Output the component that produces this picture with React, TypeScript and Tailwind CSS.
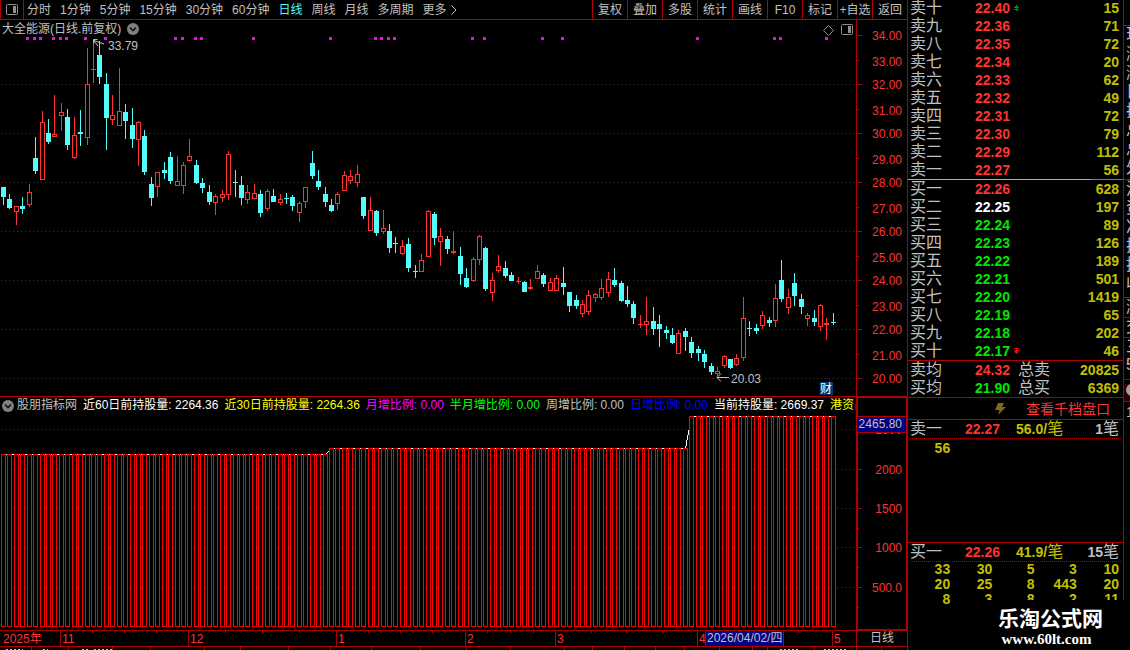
import { ReactNode } from 'react'

const LINE = '#b00000'
const UP = '#ff3232'
const DOWN = '#54fcfc'
const GRAY = '#c0c0c0'

const periods = ['分时', '1分钟', '5分钟', '15分钟', '30分钟', '60分钟', '日线', '周线', '月线', '多周期']
const tools = ['复权', '叠加', '多股', '统计', '画线', 'F10', '标记', '+自选', '返回']

// up (1) or down (0), then high, body top, body bottom, low in chart units
const candles: number[][] = [
  [0, 187, 187, 197, 205], [0, 194, 199, 208, 209], [1, 206, 206, 212, 225], [0, 197, 206, 209, 214], [1, 184, 192, 205, 207],
  [0, 137, 158, 171, 174], [1, 111, 122, 180, 180], [0, 119, 133, 142, 144], [1, 95, 134, 137, 137], [1, 103, 112, 116, 131],
  [0, 109, 117, 145, 150], [1, 117, 135, 158, 159], [0, 110, 132, 134, 146], [1, 48, 84, 138, 145], [1, 40, 69, 70, 83],
  [0, 41, 55, 77, 84], [0, 73, 84, 118, 150], [1, 95, 115, 120, 125], [1, 68, 111, 126, 126], [0, 104, 112, 121, 139],
  [0, 108, 125, 139, 148], [1, 121, 122, 140, 166], [0, 130, 136, 172, 175], [0, 177, 184, 198, 206], [1, 172, 172, 187, 197],
  [0, 162, 170, 173, 179], [0, 152, 157, 181, 184], [1, 156, 181, 186, 186], [1, 162, 165, 186, 194], [1, 139, 156, 161, 162],
  [0, 160, 165, 183, 184], [0, 178, 183, 188, 193], [0, 185, 192, 202, 205], [1, 194, 196, 203, 215], [1, 190, 194, 198, 202],
  [1, 151, 154, 195, 200], [0, 170, 182, 183, 197], [0, 176, 185, 198, 205], [1, 185, 192, 200, 204], [1, 184, 193, 199, 199],
  [0, 190, 194, 213, 217], [1, 189, 191, 209, 211], [0, 189, 196, 202, 202], [1, 194, 199, 203, 205], [0, 193, 198, 199, 204],
  [0, 195, 197, 206, 211], [1, 201, 203, 213, 222], [1, 187, 187, 202, 208], [0, 151, 163, 176, 179], [0, 170, 181, 187, 190],
  [0, 187, 194, 202, 207], [0, 199, 205, 211, 212], [1, 192, 194, 204, 210], [1, 171, 175, 191, 191], [1, 170, 176, 181, 184],
  [1, 165, 174, 183, 187], [0, 197, 197, 216, 219], [1, 197, 210, 231, 231], [0, 210, 211, 233, 236], [1, 210, 228, 232, 234],
  [0, 224, 231, 248, 253], [0, 237, 243, 244, 253], [1, 240, 246, 254, 255], [0, 238, 244, 268, 272], [0, 265, 271, 272, 278],
  [1, 254, 260, 272, 272], [1, 210, 211, 257, 257], [0, 212, 214, 238, 245], [1, 228, 236, 242, 266], [0, 236, 239, 249, 254],
  [1, 231, 251, 253, 254], [0, 247, 256, 274, 285], [0, 268, 278, 287, 288], [1, 257, 259, 281, 282], [1, 235, 236, 260, 265],
  [0, 247, 248, 289, 291], [1, 273, 280, 293, 301], [1, 255, 266, 271, 273], [0, 261, 268, 276, 278], [0, 272, 275, 281, 281],
  [1, 277, 281, 282, 284], [0, 281, 282, 292, 292], [1, 279, 287, 289, 290], [1, 265, 271, 279, 279], [0, 273, 275, 284, 287],
  [1, 278, 282, 291, 291], [1, 275, 278, 291, 291], [0, 267, 283, 287, 295], [0, 292, 292, 306, 312], [0, 295, 300, 306, 309],
  [1, 300, 304, 314, 317], [1, 290, 295, 312, 315], [1, 293, 294, 298, 302], [1, 279, 288, 298, 300], [1, 272, 279, 293, 297],
  [0, 268, 280, 285, 287], [0, 281, 283, 301, 302], [0, 286, 300, 304, 307], [0, 301, 304, 318, 324], [1, 315, 324, 325, 328],
  [1, 297, 321, 325, 335], [0, 307, 321, 329, 335], [0, 315, 324, 329, 347], [0, 326, 330, 333, 339], [0, 328, 335, 343, 344],
  [1, 330, 333, 354, 354], [0, 328, 331, 337, 351], [0, 337, 342, 353, 358], [0, 346, 349, 353, 361], [0, 350, 354, 362, 368],
  [0, 363, 366, 372, 375], [1, 367, 371, 374, 376], [1, 355, 356, 366, 368], [0, 359, 359, 368, 369], [1, 354, 358, 365, 366],
  [1, 297, 318, 358, 361], [0, 321, 328, 329, 336], [0, 324, 328, 331, 334], [1, 311, 315, 326, 329], [0, 317, 320, 323, 327],
  [1, 284, 298, 321, 327], [0, 260, 280, 299, 302], [1, 289, 297, 308, 314], [0, 273, 283, 296, 306], [0, 294, 299, 307, 314],
  [1, 313, 315, 319, 326], [0, 310, 318, 322, 326], [1, 304, 305, 327, 331], [1, 318, 323, 325, 340], [0, 313, 322, 323, 325],
]

const signals = [26, 33, 39, 52, 59, 65, 84, 104, 174, 181, 194, 200, 252, 329, 374, 380, 387, 393, 471, 483, 541, 561, 696, 773, 779, 825]
const barX = (i: number) => Math.floor(3.4 + i * 6.434)
const barTop = (i: number) => (i < 51 ? 454 : i < 107 ? 448 : 416)

const asks = [
  ['卖十', '22.40', '15'], ['卖九', '22.36', '71'], ['卖八', '22.35', '72'], ['卖七', '22.34', '20'], ['卖六', '22.33', '62'],
  ['卖五', '22.32', '49'], ['卖四', '22.31', '72'], ['卖三', '22.30', '79'], ['卖二', '22.29', '112'], ['卖一', '22.27', '56'],
]
const bids = [
  ['买一', '22.26', '628'], ['买二', '22.25', '197'], ['买三', '22.24', '89'], ['买四', '22.23', '126'], ['买五', '22.22', '189'],
  ['买六', '22.21', '501'], ['买七', '22.20', '1419'], ['买八', '22.19', '65'], ['买九', '22.18', '202'], ['买十', '22.17', '46'],
]

const indicators = [
  { text: '近60日前持股量: 2264.36', cls: 'text-white' },
  { text: '近30日前持股量: 2264.36', cls: 'text-[#ffff00]' },
  { text: '月增比例: 0.00', cls: 'text-[#ff00ff]' },
  { text: '半月增比例: 0.00', cls: 'text-[#00ff00]' },
  { text: '周增比例: 0.00', cls: 'text-[#c0c0c0]' },
  { text: '日增比例: 0.00', cls: 'text-[#0000ff]' },
  { text: '当前持股量: 2669.37', cls: 'text-white' },
  { text: '港资占比', cls: 'text-[#ffff00]' },
]

const months: [number, string][] = [[60, '11'], [188, '12'], [336, '1'], [465, '2'], [555, '3'], [697, '4'], [832, '5']]

function PanelIcon() {
  return (
    <svg className="size-3 shrink-0" viewBox="0 0 12 12" fill="none">
      <rect x="0.5" y="0.5" width="11" height="10" rx="1" stroke="#909090" />
      <rect x="7" y="2" width="3" height="7" fill="#909090" />
    </svg>
  )
}

function ChevronBadge() {
  return (
    <svg className="size-3 shrink-0" viewBox="0 0 12 12">
      <circle cx="6" cy="6" r="6" fill="#808080" />
      <path d="M3 4.5 6 7.5 9 4.5" fill="none" stroke="#101010" strokeWidth="1.6" />
    </svg>
  )
}

function GridLine({ y }: { y: number }) {
  return <line x1="1" x2="856" y1={y + 0.5} y2={y + 0.5} stroke={LINE} strokeDasharray="1 3" />
}

function Candle({ i }: { i: number }) {
  const [up, high, top, bottom, low] = candles[i]
  const x = barX(i)
  const h = bottom - top
  if (!up) {
    return (
      <g fill={DOWN}>
        <rect x={x} y={high} width="1" height={low - high} />
        <rect x={x - 2} y={top} width="5" height={h} />
      </g>
    )
  }
  return (
    <g fill={UP}>
      <rect x={x} y={high} width="1" height={low - high} />
      {h < 3
        ? <rect x={x - 2} y={top} width="5" height={h} />
        : <rect x={x - 1.5} y={top + 0.5} width="4" height={h - 1} fill="#000" stroke={UP} />}
    </g>
  )
}

function PriceChart() {
  return (
    <svg className="block h-[376px] w-full" viewBox="0 20 856 376" preserveAspectRatio="xMaxYMin meet" fontSize="12">
      <g shapeRendering="crispEdges">
        {[84, 133, 182, 231, 280, 329, 378].map(y => <GridLine key={y} y={y} />)}
        {signals.map(x => <rect key={x} x={x} y="37" width="3" height="3" fill="#ff00ff" />)}
        {candles.map((_, i) => <Candle key={i} i={i} />)}
      </g>
      <g fill="none" stroke={GRAY}>
        <path d="M94 40.5 104 44M97.5 39.5H93.5V43.5M94 41 98 46" />
        <path d="M717 377.5H729M721 373.5 717 377.5 721 381.5" />
      </g>
      <text x="108" y="50" fill={GRAY}>33.79</text>
      <text x="731" y="383" fill={GRAY}>20.03</text>
      <rect x="820" y="382" width="13" height="13" fill="#003a6e" />
      <text x="820" y="393" fill="#fff">财</text>
    </svg>
  )
}

function PriceAxis() {
  const rows = Array.from({ length: 15 }, (_, i) => 34 - i)
  return (
    <svg className="block h-[376px] w-[51px] shrink-0" viewBox="856 20 51 376" fontSize="12">
      <rect x="856" y="20" width="1" height="376" fill={LINE} />
      {rows.map((p, i) => {
        const y = Math.floor(35.5 + i * 24.5)
        return (
          <g key={p}>
            <rect x="857" y={y} width={p % 2 ? 2 : 5} height="1" fill={LINE} />
            <text x="902" y={p % 2 ? y + 6 : y + 5} textAnchor="end" fill={UP}>{p.toFixed(2)}</text>
          </g>
        )
      })}
    </svg>
  )
}

function HoldingChart() {
  const points = candles.map((_, i) => `${barX(i) + 0.5},${barTop(i) + 0.5}`).join(' ')
  return (
    <svg className="block h-[216px] w-full" viewBox="0 414 856 216" preserveAspectRatio="xMaxYMin meet" shapeRendering="crispEdges">
      {[429, 469, 508, 547, 587].map(y => <GridLine key={y} y={y} />)}
      <polyline points={points} fill="none" stroke="#fff" />
      {candles.map((_, i) => (
        <rect key={i} x={barX(i) - 1.5} y={barTop(i) + 0.5} width="4" height={626 - barTop(i)} fill="#000" stroke="#ff0000" />
      ))}
    </svg>
  )
}

function HoldingAxis() {
  const labels: [number, string][] = [[429, '2500'], [469, '2000'], [508, '1500'], [547, '1000'], [587, '500.0']]
  return (
    <svg className="block h-[233px] w-[51px] shrink-0" viewBox="856 397 51 233" fontSize="12">
      <path d="M856 397H907V630H856ZM858 398V629H906V398Z" fill={LINE} fillRule="evenodd" />
      {labels.map(([y, t]) => (
        <g key={t}>
          <rect x="858" y={y} width="4" height="1" fill={LINE} />
          <rect x="858" y={y + 20} width="1" height="1" fill={LINE} />
          <text x="902" y={y + 5} textAnchor="end" fill={UP}>{t}</text>
        </g>
      ))}
      <rect x="858" y="416" width="48" height="17" fill={LINE} />
      <rect x="857" y="417" width="49" height="15" fill="#000080" />
      <text x="902" y="428" textAnchor="end" fill={GRAY}>2465.80</text>
    </svg>
  )
}

function DateAxis() {
  return (
    <svg className="block h-[15px] w-full" viewBox="0 631 856 15" preserveAspectRatio="xMaxYMin meet" fontSize="12">
      <text x="3" y="643" fill={UP}>2025年</text>
      {months.map(([x, t]) => (
        <g key={t}>
          <rect x={x} y="631" width="1" height="15" fill={LINE} />
          <text x={x + 2} y="643" fill={UP}>{t}</text>
        </g>
      ))}
      {[92, 124, 156, 225, 262, 299, 368, 400, 432, 487, 510, 533, 591, 626, 662, 798].map(x => (
        <rect key={x} x={x} y="631" width="1" height="2" fill={LINE} />
      ))}
      <rect x="705" y="631" width="79" height="15" fill={LINE} />
      <rect x="706" y="631" width="77" height="15" fill="#000080" />
      <text x="707" y="642" fill={GRAY}>2026/04/02/四</text>
    </svg>
  )
}

function Quote({ label, price, color, vol, mark }: { label: string; price: string; color: string; vol: string; mark?: ReactNode }) {
  return (
    <tr className="h-[18px]">
      <th scope="row" className="w-[67px] p-0 pl-[2px] text-left text-base leading-[18px] font-normal text-[#c0c0c0]">{label}</th>
      <td className={`p-0 ${color}`}>
        <span className="flex items-center gap-1">{price}{mark}</span>
      </td>
      <td className="p-0 pr-1 text-right text-[#c0c000]">{vol}</td>
    </tr>
  )
}

function Total({ label, price, color, sum, vol }: { label: string; price: string; color: string; sum: string; vol: string }) {
  return (
    <div className="flex h-[18px] items-center pr-1 pl-[2px] text-[#c0c0c0]">
      <span className="w-[65px] text-base leading-[18px] font-normal">{label}</span>
      <span className={`w-[43px] ${color}`}>{price}</span>
      <span className="text-base leading-[18px] font-normal">{sum}</span>
      <span className="ml-auto text-[#c0c000]">{vol}</span>
    </div>
  )
}

function QueueHead({ label, price, avg, count }: { label: string; price: string; avg: string; count: string }) {
  return (
    <div className="mx-[2px] flex h-[19px] items-center border-b border-dotted border-[#b00000] pr-[2px] text-[#c0c0c0]">
      <span className="w-[55px] text-base leading-[18px] font-normal">{label}</span>
      <span className="w-[51px] text-[#ff3232]">{price}</span>
      <span className="text-[#c0c000]">{avg}/<span className="text-base leading-[18px] font-normal">笔</span></span>
      <span className="ml-auto">{count}<span className="text-base leading-[18px] font-normal">笔</span></span>
    </div>
  )
}

function Queue({ items }: { items: string[] }) {
  return (
    <div className="grid grid-cols-5 pr-1 text-right leading-[15px] text-[#c0c000]">
      {items.map((v, i) => <span key={i}>{v}</span>)}
    </div>
  )
}

export default function App() {
  return (
    <div className="relative flex h-screen overflow-hidden bg-black font-['Liberation_Sans','Noto_Sans_CJK_SC',sans-serif] text-xs text-[#c0c0c0]">
      <main className="min-w-0 flex-1 border-r border-[#b00000]">
        {/* Toolbar */}
        <header className="flex h-5 border-b border-[#b00000]">
          <button aria-label="panel" className="flex w-6 shrink-0 items-center justify-center border-x border-[#b00000]"><PanelIcon /></button>
          <nav className="flex flex-1 items-center gap-[9px] pl-[3px] whitespace-nowrap">
            {periods.map(p => (
              <button key={p} className={p === '日线' ? 'text-[#54fcfc]' : ''}>{p}</button>
            ))}
            <button className="flex items-center gap-1">
              更多
              <svg className="h-[10px] w-[6px]" viewBox="0 0 6 10" fill="none" stroke={GRAY}><path d="M0.5 0.5 5 5 0.5 9.5" /></svg>
            </button>
          </nav>
          {tools.map(t => (
            <button key={t} className="w-[35px] shrink-0 border-l border-[#b00000] whitespace-nowrap">{t}</button>
          ))}
        </header>

        {/* Price */}
        <section className="relative flex">
          <div className="min-w-0 flex-1"><PriceChart /></div>
          <PriceAxis />
          <div className="absolute top-0 left-0 flex h-[18px] items-center gap-[6px] pl-[2px]">
            <h1>大全能源(日线.前复权)</h1>
            <ChevronBadge />
          </div>
          <div className="absolute top-0 right-[54px] flex h-5 items-center gap-[7px]">
            <svg className="size-[11px]" viewBox="0 0 11 11" fill="none" stroke="#909090"><path d="M5.5 0.5 10.5 5.5 5.5 10.5 0.5 5.5Z" /></svg>
            <PanelIcon />
          </div>
        </section>

        {/* Indicator */}
        <section className="flex border-t border-[#b00000]">
          <div className="min-w-0 flex-1">
            <div className="flex h-[17px] items-center gap-[6px] overflow-hidden pl-[2px] leading-[17px] whitespace-nowrap">
              <span className="flex shrink-0 items-center gap-[3px]"><ChevronBadge />股朋指标网</span>
              {indicators.map(it => <span key={it.text} className={it.cls}>{it.text}</span>)}
            </div>
            <HoldingChart />
          </div>
          <HoldingAxis />
        </section>

        <section className="flex border-y border-[#b00000]">
          <div className="min-w-0 flex-1"><DateAxis /></div>
          <div className="w-[51px] shrink-0 border-l border-[#b00000] text-center leading-[15px]">日线</div>
        </section>
        <svg className="block h-[3px] w-full" viewBox="0 647 907 3" preserveAspectRatio="xMinYMin meet">
          {[31, 68, 112, 150, 204, 240, 288, 330, 371, 420, 466, 510, 564, 592, 624, 655, 684, 719, 752, 767, 814, 856, 881].map(x => (
            <rect key={x} x={x} y="647" width="1" height="3" fill={LINE} />
          ))}
          <path d="M6 649.5H23M43 649.5H48M82 649.5H88M94 649.5H112M780 649.5H800M824 649.5H848" stroke={GRAY} strokeDasharray="2 2" />
        </svg>
      </main>

      {/* Order book */}
      <aside className="w-[216px] shrink-0 border-r border-[#b00000] text-sm leading-[18px] font-bold">
        <div className="flex h-[179px] flex-col justify-end overflow-hidden">
          <table className="w-full border-collapse">
            <tbody>
              {asks.map(([label, price, vol], i) => (
                <Quote key={label} label={label} price={price} vol={vol} color="text-[#ff3232]"
                  mark={i === 0 && <svg className="h-[6px] w-[5px]" viewBox="0 0 5 6" fill="#009000"><path d="M2 0H3V1H4V2H5V3H3V4H5V5H3V6H2V5H0V4H2V3H0V2H1V1H2Z" /></svg>} />
              ))}
            </tbody>
          </table>
        </div>
        <div className="flex h-px">
          <div className="flex-1 bg-[#e8a848]" />
          <div className="w-[33px] bg-[#4888d8]" />
        </div>
        <table className="w-full border-collapse">
          <tbody>
            {bids.map(([label, price, vol], i) => (
              <Quote key={label} label={label} price={price} vol={vol}
                color={i === 0 ? 'text-[#ff3232]' : i === 1 ? 'text-white' : 'text-[#00e600]'}
                mark={i === 9 && <svg className="h-[6px] w-[5px]" viewBox="0 0 5 6" fill="#ff0000"><path d="M0 0H5V1H3V2H5V3H4V4H5V4H4V5H3V6H2V5H1V4H0V3H1V2H2V1H0Z" /></svg>} />
            ))}
          </tbody>
        </table>
        <div className="border-y border-[#b00000]">
          <Total label="卖均" price="24.32" color="text-[#ff3232]" sum="总卖" vol="20825" />
          <Total label="买均" price="21.90" color="text-[#00e600]" sum="总买" vol="6369" />
        </div>
        <a href="#depth" className="flex h-[22px] items-center justify-end gap-5 border-b border-[#b00000] pr-[13px] font-normal text-[#ff3232]">
          <svg className="h-3 w-[11px]" viewBox="0 0 11 12" fill="#806820"><path d="M3 0H9L7 4H11L3 12 4.5 7H0Z" /></svg>
          查看千档盘口
        </a>
        <div className="h-[122px]">
          <QueueHead label="卖一" price="22.27" avg="56.0" count="1" />
          <div className="pt-[2px]"><Queue items={['56']} /></div>
        </div>
        <div className="border-t border-[#b00000]">
          <QueueHead label="买一" price="22.26" avg="41.9" count="15" />
          <Queue items={['33', '30', '5', '3', '10', '20', '25', '8', '443', '20', '8', '3', '8', '2', '11']} />
        </div>
      </aside>

      {/* Detail column, runs past the window edge */}
      <aside className="w-[6px] shrink-0 overflow-hidden text-base leading-[18px] whitespace-nowrap *:border-b *:border-[#b00000] *:pl-[2px]">
        <div className="h-[26px]" />
        <div className="h-[154px] *:h-[19px]">
          {['现价', '涨跌', '涨幅', '日高', '振幅', '总量', '总额', '外盘'].map(t => <div key={t}>{t}</div>)}
        </div>
        <div className="h-[118px] *:h-[19px]">
          {['流通', '资产', '净资', '换手', '换股', '收益'].map(t => <div key={t}>{t}</div>)}
        </div>
        <div className="h-5">涨</div>
        <div className="h-5">交</div>
        <div className="h-[42px]"><div>三</div><div>5</div></div>
        <div className="h-[18px] bg-[#300000]">
          <svg className="mt-1 size-3" viewBox="0 0 12 12"><circle cx="6" cy="6" r="6" fill="#a0a0a0" /></svg>
        </div>
        <div className="border-none text-sm">1</div>
      </aside>

      <footer className="absolute right-0 bottom-0 flex h-[50px] w-[175px] flex-col items-center bg-black pt-[6px] pl-4 font-bold text-white">
        <div className="text-[21px] leading-[25px]">乐淘公式网</div>
        <a href="#home" className="pr-2 font-['Liberation_Serif',serif] text-[15px] leading-[17px]">www.60lt.com</a>
      </footer>
    </div>
  )
}
